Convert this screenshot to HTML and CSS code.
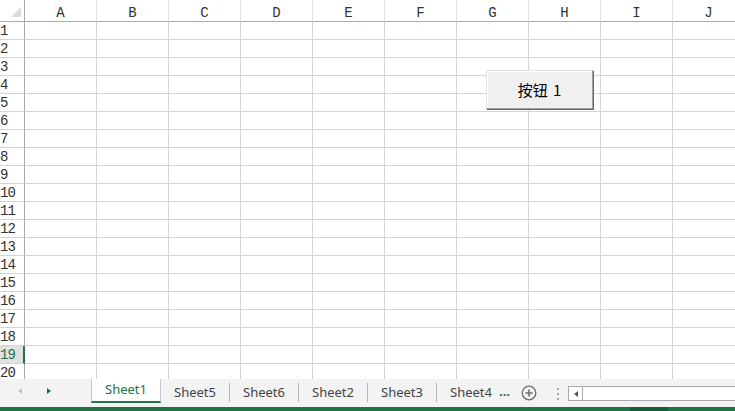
FILE: index.html
```
<!DOCTYPE html>
<html lang="zh">
<head>
<meta charset="utf-8">
<title>Sheet</title>
<link rel="stylesheet" href="styles.css">
</head>
<body>
<div class="app">
  <div class="sheet">
    <div class="grid">
      <div class="corner"><div class="tri"></div></div>
      <div class="ch">A</div><div class="ch">B</div><div class="ch">C</div><div class="ch">D</div><div class="ch">E</div><div class="ch">F</div><div class="ch">G</div><div class="ch">H</div><div class="ch">I</div><div class="ch">J</div>
      <div class="rh">1</div><div class="c"></div><div class="c"></div><div class="c"></div><div class="c"></div><div class="c"></div><div class="c"></div><div class="c"></div><div class="c"></div><div class="c"></div><div class="c"></div>
      <div class="rh">2</div><div class="c"></div><div class="c"></div><div class="c"></div><div class="c"></div><div class="c"></div><div class="c"></div><div class="c"></div><div class="c"></div><div class="c"></div><div class="c"></div>
      <div class="rh">3</div><div class="c"></div><div class="c"></div><div class="c"></div><div class="c"></div><div class="c"></div><div class="c"></div><div class="c"></div><div class="c"></div><div class="c"></div><div class="c"></div>
      <div class="rh">4</div><div class="c"></div><div class="c"></div><div class="c"></div><div class="c"></div><div class="c"></div><div class="c"></div><div class="c"></div><div class="c"></div><div class="c"></div><div class="c"></div>
      <div class="rh">5</div><div class="c"></div><div class="c"></div><div class="c"></div><div class="c"></div><div class="c"></div><div class="c"></div><div class="c"></div><div class="c"></div><div class="c"></div><div class="c"></div>
      <div class="rh">6</div><div class="c"></div><div class="c"></div><div class="c"></div><div class="c"></div><div class="c"></div><div class="c"></div><div class="c"></div><div class="c"></div><div class="c"></div><div class="c"></div>
      <div class="rh">7</div><div class="c"></div><div class="c"></div><div class="c"></div><div class="c"></div><div class="c"></div><div class="c"></div><div class="c"></div><div class="c"></div><div class="c"></div><div class="c"></div>
      <div class="rh">8</div><div class="c"></div><div class="c"></div><div class="c"></div><div class="c"></div><div class="c"></div><div class="c"></div><div class="c"></div><div class="c"></div><div class="c"></div><div class="c"></div>
      <div class="rh">9</div><div class="c"></div><div class="c"></div><div class="c"></div><div class="c"></div><div class="c"></div><div class="c"></div><div class="c"></div><div class="c"></div><div class="c"></div><div class="c"></div>
      <div class="rh">10</div><div class="c"></div><div class="c"></div><div class="c"></div><div class="c"></div><div class="c"></div><div class="c"></div><div class="c"></div><div class="c"></div><div class="c"></div><div class="c"></div>
      <div class="rh">11</div><div class="c"></div><div class="c"></div><div class="c"></div><div class="c"></div><div class="c"></div><div class="c"></div><div class="c"></div><div class="c"></div><div class="c"></div><div class="c"></div>
      <div class="rh">12</div><div class="c"></div><div class="c"></div><div class="c"></div><div class="c"></div><div class="c"></div><div class="c"></div><div class="c"></div><div class="c"></div><div class="c"></div><div class="c"></div>
      <div class="rh">13</div><div class="c"></div><div class="c"></div><div class="c"></div><div class="c"></div><div class="c"></div><div class="c"></div><div class="c"></div><div class="c"></div><div class="c"></div><div class="c"></div>
      <div class="rh">14</div><div class="c"></div><div class="c"></div><div class="c"></div><div class="c"></div><div class="c"></div><div class="c"></div><div class="c"></div><div class="c"></div><div class="c"></div><div class="c"></div>
      <div class="rh">15</div><div class="c"></div><div class="c"></div><div class="c"></div><div class="c"></div><div class="c"></div><div class="c"></div><div class="c"></div><div class="c"></div><div class="c"></div><div class="c"></div>
      <div class="rh">16</div><div class="c"></div><div class="c"></div><div class="c"></div><div class="c"></div><div class="c"></div><div class="c"></div><div class="c"></div><div class="c"></div><div class="c"></div><div class="c"></div>
      <div class="rh">17</div><div class="c"></div><div class="c"></div><div class="c"></div><div class="c"></div><div class="c"></div><div class="c"></div><div class="c"></div><div class="c"></div><div class="c"></div><div class="c"></div>
      <div class="rh">18</div><div class="c"></div><div class="c"></div><div class="c"></div><div class="c"></div><div class="c"></div><div class="c"></div><div class="c"></div><div class="c"></div><div class="c"></div><div class="c"></div>
      <div class="rh sel">19</div><div class="c"></div><div class="c"></div><div class="c"></div><div class="c"></div><div class="c"></div><div class="c"></div><div class="c"></div><div class="c"></div><div class="c"></div><div class="c"></div>
      <div class="rh">20</div><div class="c"></div><div class="c"></div><div class="c"></div><div class="c"></div><div class="c"></div><div class="c"></div><div class="c"></div><div class="c"></div><div class="c"></div><div class="c"></div>
    </div>
    <button class="form-btn">按钮 1</button>
  </div>
  <div class="tabbar">
    <div class="nav">
      <span class="arrow left"></span>
      <span class="arrow right"></span>
    </div>
    <div class="tabs">
      <div class="tab active">Sheet1</div>
      <div class="tab">Sheet5</div>
      <div class="tab">Sheet6</div>
      <div class="tab">Sheet2</div>
      <div class="tab">Sheet3</div>
      <div class="tab last">Sheet4</div>
    </div>
    <div class="more">...</div>
    <div class="add">
      <svg width="16" height="16" viewBox="0 0 16 16"><circle cx="8" cy="8" r="6.8" fill="none" stroke="#6f6f6f" stroke-width="1.3"/><path d="M8 4.4v7.2M4.4 8h7.2" stroke="#6f6f6f" stroke-width="1.6"/></svg>
    </div>
    <div class="vdots"><i></i><i></i><i></i></div>
    <div class="hscroll">
      <div class="sbtn"><span class="sarrow"></span></div>
      <div class="track"></div>
    </div>
  </div>
  <div class="status"><span class="seg"></span></div>
</div>
</body>
</html>
```

FILE: styles.css
```
* { box-sizing: border-box; }
html, body { margin: 0; padding: 0; background: #fff; }
.app {
  width: 735px;
  height: 411px;
  overflow: hidden;
  display: flex;
  flex-direction: column;
}
.sheet {
  position: relative;
  height: 379px;
  overflow: hidden;
  flex: none;
}
.grid {
  display: grid;
  grid-template-columns: 25px repeat(10, 72px);
  grid-template-rows: 22px repeat(20, 18px);
  width: 745px;
  font-family: "Liberation Mono", "DejaVu Sans Mono", monospace;
  font-size: 14px;
  color: #333;
}
.corner {
  border-right: 1px solid #ababab;
  border-bottom: 1px solid #ababab;
  display: flex;
  align-items: flex-end;
  justify-content: flex-end;
  padding: 0 3px 4px 0;
}
.tri {
  width: 10px;
  height: 10px;
  background: #dcdcdc;
  clip-path: polygon(100% 0, 100% 100%, 0 100%);
}
.ch {
  border-right: 1px solid #e1e1e1;
  border-bottom: 1px solid #ababab;
  display: flex;
  align-items: center;
  justify-content: center;
  padding-top: 5px;
  line-height: 1;
}
.rh {
  border-right: 1px solid #ababab;
  border-bottom: 1px solid #d4d4d4;
  display: flex;
  align-items: center;
  padding-left: 0;
  padding-bottom: 0;
  line-height: 1;
  letter-spacing: -1px;
}
.rh.sel {
  background: #e1e1e1;
  color: #217346;
  border-right: 2px solid #217346;
}
.c {
  border-right: 1px solid #d4d4d4;
  border-bottom: 1px solid #d4d4d4;
}
.form-btn {
  position: absolute;
  left: 486px;
  top: 70px;
  width: 107px;
  height: 39px;
  margin: 0;
  padding: 0 0 1px 0;
  background: #f0f0f0;
  border: 1px solid;
  border-color: #e3e3e3 #a0a0a0 #a0a0a0 #e3e3e3;
  box-shadow: 1px 1px 0 #696969, inset 1px 1px 0 #fff;
  font-family: "Noto Sans CJK SC", "Noto Sans", sans-serif;
  font-size: 15px;
  color: #000;
  line-height: 1;
  word-spacing: 2px;
}
.tabbar {
  height: 28px;
  flex: none;
  background: #f3f3f3;
  display: flex;
  align-items: flex-start;
  font-family: "Noto Sans", "Open Sans", sans-serif;
  font-size: 13px;
  color: #444;
}
.nav {
  width: 91px;
  height: 24px;
  display: flex;
  align-items: center;
  padding-left: 18px;
  gap: 25px;
  flex: none;
}
.arrow {
  width: 0;
  height: 0;
  border-top: 3.5px solid transparent;
  border-bottom: 3.5px solid transparent;
}
.arrow.left { border-right: 4px solid #c3c3c3; }
.arrow.right { border-left: 4px solid #1e6b40; }
.tabs {
  display: flex;
  align-items: flex-start;
  flex: none;
}
.tab {
  width: 69px;
  height: 19px;
  margin-top: 4px;
  border-right: 1px solid #b5b5b5;
  display: flex;
  align-items: center;
  justify-content: center;
  white-space: nowrap;
  line-height: 1;
  padding-bottom: 1px;
}
.tab.active {
  width: 70px;
  height: 24px;
  margin-top: 0;
  background: #fff;
  color: #217346;
  border-left: 1px solid #c6c6c6;
  border-right: 1px solid #c6c6c6;
  border-bottom: 2px solid #217346;
  padding-bottom: 1px;
}
.tab.last {
  width: 60px;
  border-right: none;
  justify-content: flex-start;
  padding-left: 13px;
}
.more {
  width: 22px;
  height: 24px;
  color: #217346;
  font-weight: bold;
  display: flex;
  align-items: center;
  padding-left: 2px;
  padding-bottom: 1px;
  flex: none;
}
.add {
  width: 26px;
  height: 24px;
  display: flex;
  align-items: center;
  padding-left: 2px;
  padding-top: 3px;
  flex: none;
}
.vdots {
  width: 23px;
  height: 24px;
  display: flex;
  flex-direction: column;
  align-items: center;
  justify-content: center;
  gap: 3px;
  padding-top: 5px;
  padding-left: 2px;
  flex: none;
}
.vdots i {
  display: block;
  width: 2px;
  height: 2px;
  background: #a8a8a8;
}
.hscroll {
  margin-top: 7px;
  height: 15px;
  flex: 1;
  display: flex;
  border: 1px solid #ababab;
  border-right: none;
  background: #fff;
}
.sbtn {
  width: 14px;
  border-right: 1px solid #ababab;
  display: flex;
  align-items: center;
  justify-content: center;
}
.sarrow {
  width: 0;
  height: 0;
  border-top: 3.5px solid transparent;
  border-bottom: 3.5px solid transparent;
  border-right: 4px solid #555;
}
.track { flex: 1; }
.status {
  height: 4px;
  flex: none;
  background: #217346;
  display: flex;
  padding-left: 630px;
}
.seg {
  width: 38px;
  background: #185c37;
}
```
